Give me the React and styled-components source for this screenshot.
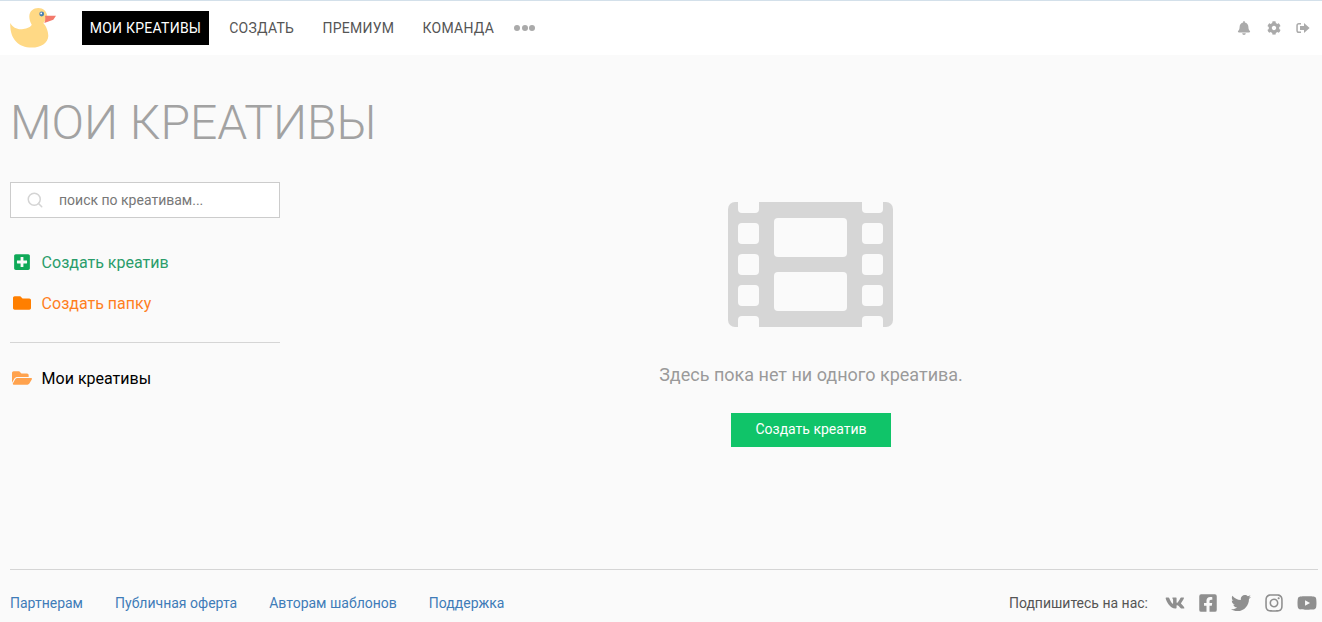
import React from 'react';
import styled, { createGlobalStyle } from 'styled-components';
import { FaBell, FaCog, FaPlusSquare, FaFolder, FaFolderOpen, FaVk, FaFacebookSquare, FaTwitter, FaInstagram, FaYoutube } from 'react-icons/fa';
import { FiSearch } from 'react-icons/fi';

const GlobalStyle = createGlobalStyle`
    html, body {
        margin: 0;
        padding: 0;
        height: 100%;
        overflow: hidden;
        background: #fafafa;
        font-family: Roboto, "Liberation Sans", sans-serif;
    }
`;

const Page = styled.div`
    display: flex;
    flex-direction: column;
    height: 622px;
`;

const Header = styled.header`
    display: flex;
    align-items: center;
    height: 54px;
    background: #fff;
    border-top: 1px solid #d3e0ea;
    padding: 0 10px;
    flex-shrink: 0;
`;

const LogoBox = styled.a`
    display: flex;
    width: 72px;
`;

const Nav = styled.nav`
    display: flex;
    align-items: center;
    gap: 12.3px;
`;

const NavItem = styled.a`
    display: block;
    padding: 0 ${(p) => (p.$active ? '7.7px' : '8px')};
    line-height: 34px;
    font-size: 14px;
    letter-spacing: 0.25px;
    color: ${(p) => (p.$active ? '#fff' : '#555')};
    background: ${(p) => (p.$active ? '#000' : 'transparent')};
`;

const Dots = styled.div`
    display: flex;
    gap: 1.5px;
`;

const Dot = styled.span`
    width: 6px;
    height: 6px;
    border-radius: 50%;
    background: #aaa;
`;

const HeaderIcons = styled.div`
    display: flex;
    align-items: center;
    gap: 15.5px;
    margin-left: auto;
    color: #aaa;
    font-size: 14px;
    padding-right: 2px;

    svg {
        display: block;
    }
`;

const Main = styled.main`
    flex: 1;
    padding: 0 0 0 10px;
`;

const Title = styled.h1`
    margin: 40px 0 31px;
    font-size: 48px;
    line-height: 56px;
    font-weight: 300;
    color: #a2a2a2;
`;

const Columns = styled.div`
    display: grid;
    grid-template-columns: 270px 1fr;
    column-gap: 20px;
`;

const Sidebar = styled.aside`
    display: flex;
    flex-direction: column;
`;

const SearchBox = styled.label`
    display: flex;
    align-items: center;
    height: 34px;
    background: #fff;
    border: 1px solid #ccc;
    padding-left: 15px;
    color: #d4d4d4;
    font-size: 18px;
`;

const SearchInput = styled.input`
    border: none;
    outline: none;
    background: transparent;
    margin-left: 13px;
    flex: 1;
    min-width: 0;
    font: 14px Roboto, sans-serif;
    color: #777;

    &::placeholder {
        color: #777;
        opacity: 1;
    }
`;

const ActionRow = styled.a`
    display: flex;
    align-items: center;
    height: 41px;
    font-size: 16px;
    color: ${(p) => p.$color};
`;

const ActionIcon = styled.span`
    display: flex;
    justify-content: center;
    width: 24px;
    margin: 0 7.6px 2px 0;
    font-size: ${(p) => p.$size || 18}px;
    color: ${(p) => p.$color};
`;

const Actions = styled.div`
    margin-top: 24px;
`;

const Divider = styled.hr`
    border: none;
    border-top: 1px solid #d5d5d5;
    margin: 18px 0 15px;
`;

const FolderRow = styled(ActionRow)`
    color: #000;
    font-weight: 400;
`;

const Empty = styled.section`
    display: flex;
    flex-direction: column;
    align-items: center;
    padding-top: 20px;
`;

const EmptyText = styled.p`
    margin: 36px 0 0;
    font-size: 18px;
    line-height: 24px;
    color: #9a9a9a;
`;

const CreateButton = styled.button`
    margin-top: 26px;
    width: 160px;
    height: 34px;
    border: none;
    padding: 0 0 2px;
    background: #10c469;
    color: #fff;
    font: 14px Roboto, sans-serif;
`;

const Footer = styled.footer`
    display: flex;
    align-items: center;
    justify-content: space-between;
    height: 53px;
    margin: 0 4px 0 10px;
    border-top: 1px solid #d5d5d5;
    padding: 14px 1px 0 0;
    box-sizing: border-box;
    flex-shrink: 0;
`;

const FooterLinks = styled.div`
    display: flex;
    gap: 32px;
`;

const FooterLink = styled.a`
    font-size: 14px;
    color: #3f7cb8;
`;

const Social = styled.div`
    display: flex;
    align-items: center;
    gap: 13px;
    color: #555;
    font-size: 14px;
`;

const SocialLabel = styled.span`
    margin-right: 4px;
`;

const SocialIcon = styled.a`
    display: flex;
    color: #8f8f8f;
    font-size: 20px;
`;

const FilmSvg = styled.svg`
    margin-right: 1px;
`;

const Duck = () => (
    <svg width="47" height="40" viewBox="10 8 47 40">
        <path
            d="M10.3 23 C13 28 18 30 23.3 29 C27 28.5 31 27 31.7 24.7 C30 22 29.3 19 29.3 16.3 C29.5 11 33.5 8 38.3 8 C43 8 47 11.5 47.3 16.3 C47.5 19 45 21 43.3 23 C46 26 48.3 31 48.3 36 C48 43 41 47.6 31.7 47.6 C18 47.6 9.5 38 10.3 23 Z"
            fill="#ffd985"
        />
        <path d="M45 15.7 H56 L53.3 19.7 L44.3 23 C45.5 20.5 45.6 18 45 15.7 Z" fill="#f3796b" />
        <circle cx="41.7" cy="14" r="2.4" fill="#4a7fb0" />
        <circle cx="41.2" cy="13.4" r="0.9" fill="#fff" />
    </svg>
);

const SignOut = () => (
    <svg width="14" height="14" viewBox="0 0 14 12" fill="currentColor">
        <path d="M5 1 H3 C1.3 1 0.3 2 0.3 3.6 V8.4 C0.3 10 1.3 11 3 11 H5 V9.5 H3 C2.3 9.5 1.8 9 1.8 8.4 V3.6 C1.8 3 2.3 2.5 3 2.5 H5 Z" />
        <path d="M8 1 L13.6 6 L8 11 V8 H4 V4 H8 Z" />
    </svg>
);

const Film = () => {
    const holes = [
        [10, -6, 21, 17], [134, -6, 21, 17],
        [10, 21, 21, 21], [10, 52, 21, 21], [10, 83, 21, 21],
        [134, 21, 21, 21], [134, 52, 21, 21], [134, 83, 21, 21],
        [10, 114, 21, 17], [134, 114, 21, 17],
        [46, 16, 73, 39], [46, 70, 73, 39],
    ];
    return (
        <FilmSvg width="165" height="125" viewBox="0 0 165 125">
            <defs>
                <clipPath id="film-frame">
                    <rect width="165" height="125" rx="7" />
                </clipPath>
            </defs>
            <g clipPath="url(#film-frame)">
                <rect width="165" height="125" fill="#d6d6d6" />
                {holes.map(([x, y, w, h]) => (
                    <rect key={`${x}-${y}`} x={x} y={y} width={w} height={h} rx="4" fill="#fafafa" />
                ))}
            </g>
        </FilmSvg>
    );
};

const App = () => (
    <Page>
        <GlobalStyle />
        <Header>
            <LogoBox><Duck /></LogoBox>
            <Nav>
                <NavItem $active>МОИ КРЕАТИВЫ</NavItem>
                <NavItem>СОЗДАТЬ</NavItem>
                <NavItem>ПРЕМИУМ</NavItem>
                <NavItem>КОМАНДА</NavItem>
                <Dots><Dot /><Dot /><Dot /></Dots>
            </Nav>
            <HeaderIcons>
                <FaBell />
                <FaCog />
                <SignOut />
            </HeaderIcons>
        </Header>
        <Main>
            <Title>МОИ КРЕАТИВЫ</Title>
            <Columns>
                <Sidebar>
                    <SearchBox>
                        <FiSearch />
                        <SearchInput placeholder="поиск по креативам..." />
                    </SearchBox>
                    <Actions>
                        <ActionRow $color="#2a9d6b">
                            <ActionIcon $color="#0fa958"><FaPlusSquare /></ActionIcon>
                            Создать креатив
                        </ActionRow>
                        <ActionRow $color="#ff7f1e">
                            <ActionIcon $color="#ff7f00"><FaFolder /></ActionIcon>
                            Создать папку
                        </ActionRow>
                    </Actions>
                    <Divider />
                    <FolderRow>
                        <ActionIcon $color="#ffa24d" $size={20}><FaFolderOpen /></ActionIcon>
                        Мои креативы
                    </FolderRow>
                </Sidebar>
                <Empty>
                    <Film />
                    <EmptyText>Здесь пока нет ни одного креатива.</EmptyText>
                    <CreateButton>Создать креатив</CreateButton>
                </Empty>
            </Columns>
        </Main>
        <Footer>
            <FooterLinks>
                <FooterLink>Партнерам</FooterLink>
                <FooterLink>Публичная оферта</FooterLink>
                <FooterLink>Авторам шаблонов</FooterLink>
                <FooterLink>Поддержка</FooterLink>
            </FooterLinks>
            <Social>
                <SocialLabel>Подпишитесь на нас:</SocialLabel>
                <SocialIcon><FaVk /></SocialIcon>
                <SocialIcon><FaFacebookSquare /></SocialIcon>
                <SocialIcon><FaTwitter /></SocialIcon>
                <SocialIcon><FaInstagram /></SocialIcon>
                <SocialIcon><FaYoutube /></SocialIcon>
            </Social>
        </Footer>
    </Page>
);

export default App;
